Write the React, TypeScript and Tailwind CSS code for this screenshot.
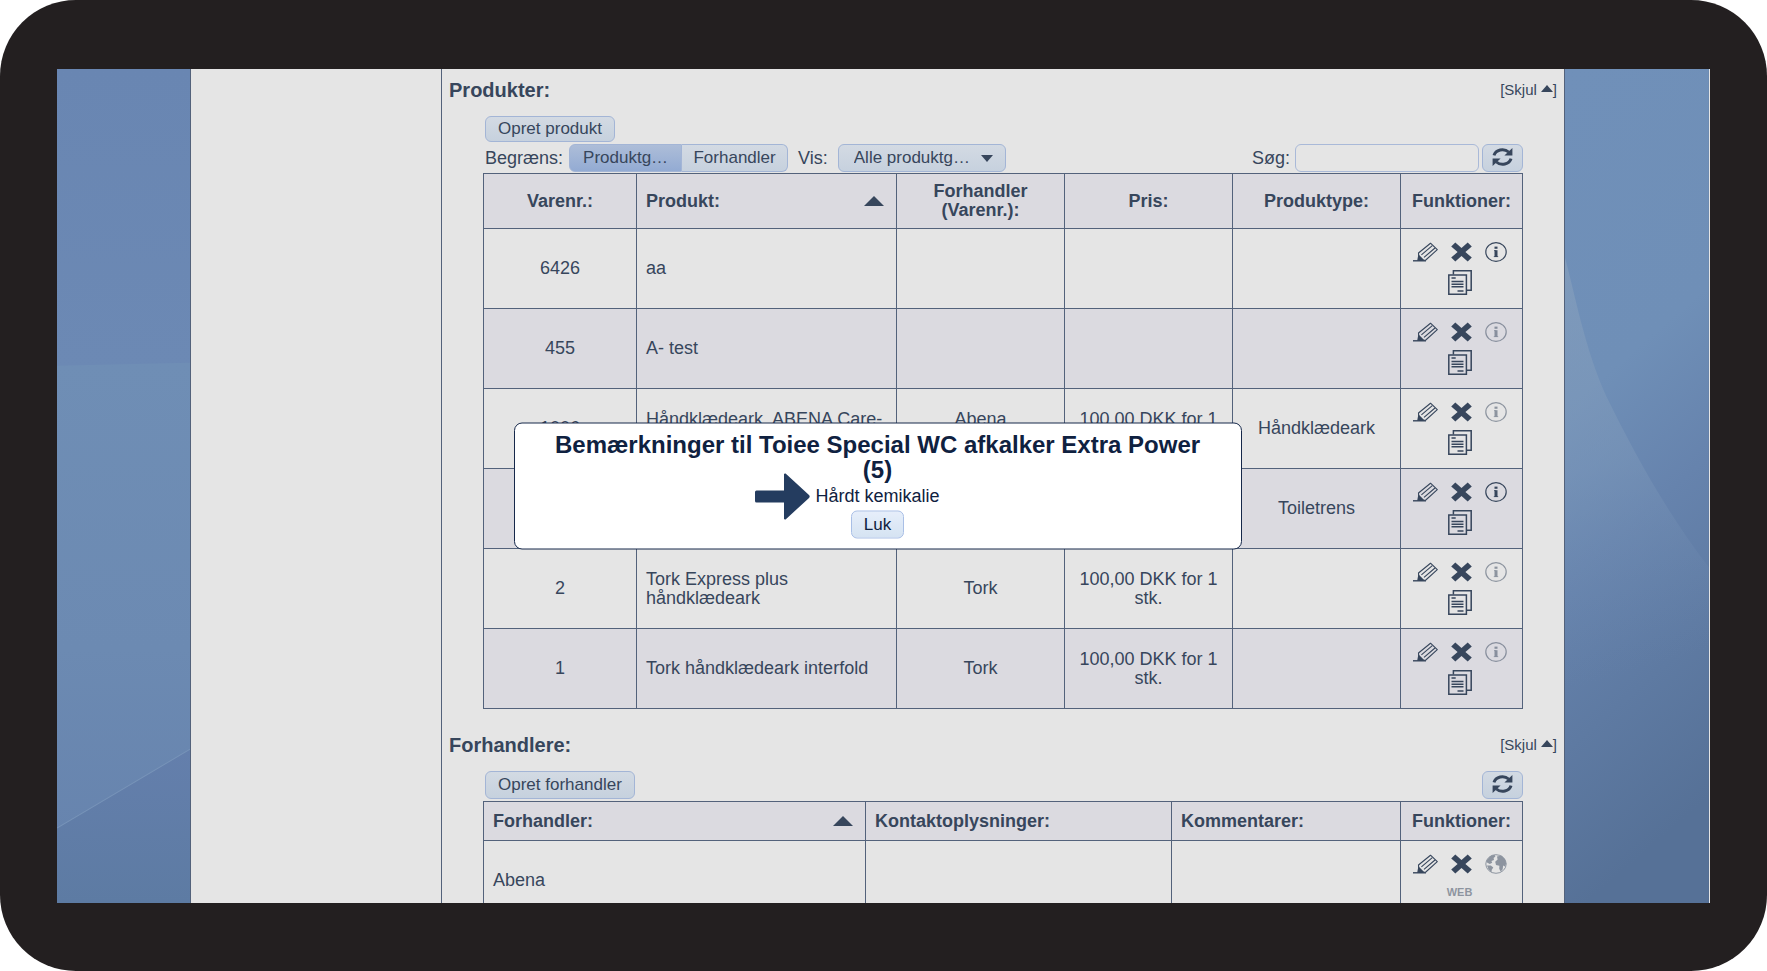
import React, { useState } from "react";
import clsx from "clsx";

interface Product {
  id: string;
  name: string;
  dealer?: string;
  price?: string;
  type?: string;
  hasNote?: boolean;
}

const products: Product[] = [
  { id: "6426", name: "aa", hasNote: true },
  { id: "455", name: "A- test" },
  { id: "1006", name: "Håndklædeark, ABENA Care-Ness", dealer: "Abena (1000006426)", price: "100,00 DKK for 1 stk.", type: "Håndklædeark" },
  { id: "5", name: "Toiee Special WC afkalker Extra Power", dealer: "Abena", price: "100,00 DKK for 1 stk.", type: "Toiletrens", hasNote: true },
  { id: "2", name: "Tork Express plus håndklædeark", dealer: "Tork", price: "100,00 DKK for 1 stk." },
  { id: "1", name: "Tork håndklædeark interfold", dealer: "Tork", price: "100,00 DKK for 1 stk." },
];

const cell = "border border-[#53627b] px-[9px]";
const buttonBase = "rounded-md border border-[#a3b5d6] bg-linear-to-b text-[17px] leading-6";
const buttonStyle = clsx(buttonBase, "from-[#d3dae3] to-[#c6d1de]");
const buttonActive = clsx(buttonBase, "from-[#adbdd8] to-[#93abd3]");

function PencilIcon() {
  return (
    <svg viewBox="0 0 25 20" className="h-5 w-[25px]" fill="none" stroke="currentColor" strokeWidth="1.1">
      <path d="M0 18.8h13" strokeWidth="1.4" />
      <path d="M5.5 11 17.5 1.2 24.3 7.6 12.8 18 6 18.4z" strokeLinejoin="round" />
      <path d="M8.4 12.8 19.3 3.6M11 15.4 22 6" />
      <path d="M5.4 12.2 11.6 18.4 4.2 18.8z" fill="currentColor" stroke="none" />
    </svg>
  );
}

function CrossIcon() {
  return (
    <svg viewBox="0 0 21 20" className="h-5 w-[21px]" fill="currentColor">
      <path d="M4.3.4 10.5 6 16.7.4 20.8 4.4 14.4 10l6.4 5.6-4.1 4-6.2-5.6-6.2 5.6-4.1-4L6.6 10 .2 4.4z" />
    </svg>
  );
}

function InfoIcon() {
  return (
    <svg viewBox="0 0 22 20" className="h-5 w-[22px]" fill="none" stroke="currentColor">
      <ellipse cx="11" cy="10" rx="10.2" ry="9.3" strokeWidth="1.2" />
      <path d="M11 8.2v6.8" strokeWidth="3" />
      <path d="M11 4.6v2.2" strokeWidth="3" />
      <path d="M9 8.6h2M8.8 14.6h4.4" strokeWidth="0.8" />
    </svg>
  );
}

function CopyIcon() {
  return (
    <svg viewBox="0 0 24 25" className="h-[25px] w-6" fill="none" stroke="currentColor" strokeWidth="1.5">
      <path d="M5.4 4.5V.8h17.8v19.4h-4.4" />
      <path d="M.8 5h17.6v19.2H.8z" />
      <path d="M3.5 8h4.2M3.5 11.6h12M3.5 14.2h12M3.5 16.8h12M9.5 21h6" />
    </svg>
  );
}

function GlobeIcon() {
  return (
    <svg viewBox="0 0 22 20" className="h-5 w-[22px]">
      <ellipse cx="11" cy="10" rx="10.2" ry="9.3" fill="none" stroke="currentColor" strokeWidth="1" />
      <path d="M1.5 6.4 5.4 2 9.4.8l1 1.6L8.6 4l.4 2-2.6 1 .8 1.8-2.4 1.2L2 8.6zM2 11.6l3.8-.2 2.5 2.2-1.5 2.2-.4 2.4-3-3zM12 2.6l4.4-1 3.6 3.6 1.2 4.4-1.2 2.8-1.8-1-.6 4-2 2-1.4-2.6.2-3-3.4-.8-.8-3.2 2.4-2.2z" fill="currentColor" />
    </svg>
  );
}

function RefreshIcon() {
  return (
    <svg viewBox="0 0 21 20" className="h-5 w-[21px]" fill="none" stroke="currentColor" strokeWidth="3">
      <path d="M2 8.4A8.6 7.4 0 0 1 16.6 5" />
      <path d="M19 11.6A8.6 7.4 0 0 1 4.4 15" />
      <path d="M20.4 1v7.6h-8zM.6 19v-7.6h8z" fill="currentColor" stroke="none" />
    </svg>
  );
}

function Triangle({ className }: { className: string }) {
  return (
    <svg viewBox="0 0 20 10" className={className} fill="currentColor" preserveAspectRatio="none">
      <path d="M10 0 20 10H0z" />
    </svg>
  );
}

function SectionTitle({ title, open, onToggle }: { title: string; open: boolean; onToggle: () => void }) {
  return (
    <div className="flex items-center justify-between px-[7px]">
      <h2 className="text-[20px] leading-6 font-bold">{title}</h2>
      <button type="button" onClick={onToggle} className="flex items-center text-[15px] leading-6">
        [{open ? "Skjul" : "Vis"}
        <Triangle className="mb-1 ml-1 h-[7px] w-3" />]
      </button>
    </div>
  );
}

function RowActions({ last, children }: { last: React.ReactNode; children: React.ReactNode }) {
  return (
    <div className="flex flex-col items-center gap-2 pr-1">
      <div className="flex items-center gap-[13px]">
        <button type="button" aria-label="Rediger"><PencilIcon /></button>
        <button type="button" aria-label="Slet"><CrossIcon /></button>
        {last}
      </div>
      {children}
    </div>
  );
}

function LeftWallpaper() {
  return (
    <svg viewBox="0 0 133 835" preserveAspectRatio="none" className="h-full w-full">
      <defs>
        <linearGradient id="leftTop" x1="0" y1="0" x2="0" y2="1">
          <stop offset="0" stopColor="#6986b2" />
          <stop offset="1" stopColor="#6c89b4" />
        </linearGradient>
        <linearGradient id="leftMid" x1="0" y1="0" x2="0" y2="1">
          <stop offset="0" stopColor="#6f8eb5" />
          <stop offset="0.6" stopColor="#6c8ab2" />
          <stop offset="1" stopColor="#6784ae" />
        </linearGradient>
        <linearGradient id="leftLow" x1="0" y1="0" x2="0" y2="1">
          <stop offset="0" stopColor="#647fac" />
          <stop offset="1" stopColor="#5d7ba3" />
        </linearGradient>
      </defs>
      <path d="M0 0H133V300H0z" fill="url(#leftTop)" />
      <path d="M0 297 133 294V700L0 770z" fill="url(#leftMid)" />
      <path d="M0 760 133 681V835H0z" fill="url(#leftLow)" />
      <path d="M0 760 133 681" stroke="#7793b8" strokeWidth="1" />
    </svg>
  );
}

function RightWallpaper() {
  return (
    <svg viewBox="0 0 146 835" preserveAspectRatio="none" className="h-full w-full">
      <defs>
        <linearGradient id="rightBase" x1="0" y1="0" x2="0.15" y2="1">
          <stop offset="0" stopColor="#7090b9" />
          <stop offset="0.4" stopColor="#6f8fb7" />
          <stop offset="0.6" stopColor="#6683ad" />
          <stop offset="1" stopColor="#567197" />
        </linearGradient>
        <linearGradient id="rightGlow" x1="0" y1="0" x2="0.1" y2="1">
          <stop offset="0" stopColor="#8aa2bd" stopOpacity="0.6" />
          <stop offset="0.5" stopColor="#7f9abb" stopOpacity="0.45" />
          <stop offset="1" stopColor="#6d89b0" stopOpacity="0" />
        </linearGradient>
      </defs>
      <path d="M0 0H146V835H0z" fill="url(#rightBase)" />
      <path d="M0 189C10 225 20 280 42 328 68 380 100 440 146 499V620H0z" fill="url(#rightGlow)" />
    </svg>
  );
}

function NoteDialog({ onClose }: { onClose: () => void }) {
  return (
    <div
      role="dialog"
      aria-labelledby="note-title"
      className="absolute top-1/2 left-1/2 flex w-[728px] -translate-x-1/2 -translate-y-1/2 flex-col items-center rounded-lg border border-[#16284a] bg-white px-8 pt-2 pb-[10px] text-[#0f2140]"
    >
      <h2 id="note-title" className="text-center text-[24px] leading-[25px] font-bold">
        Bemærkninger til Toiee Special WC afkalker Extra Power (5)
      </h2>
      <div className="relative">
        <svg viewBox="0 0 55 47" className="absolute top-1/2 right-full mr-1.5 h-[47px] w-[55px] -translate-y-1/2" fill="#243c5f">
          <path d="M1.5 17.5H29V1.2Q29.4 0 30.6.6L54 22Q55.4 23.5 54 25L30.6 46.4Q29.4 47 29 45.8V29.5H1.5Q0 29.5 0 28V19Q0 17.5 1.5 17.5z" />
        </svg>
        <p className="text-[18px] leading-[29px]">Hårdt kemikalie</p>
      </div>
      <button
        type="button"
        onClick={onClose}
        className="h-7 rounded-md border border-[#a9bfe6] bg-linear-to-b from-[#e6eefa] to-[#d5e3f2] px-3 text-[17px] leading-6"
      >
        Luk
      </button>
    </div>
  );
}

export default function App() {
  const [groupBy, setGroupBy] = useState("product");
  const [showProducts, setShowProducts] = useState(true);
  const [showDealers, setShowDealers] = useState(true);
  const [noteOpen, setNoteOpen] = useState(true);

  return (
    <div className="h-screen bg-white font-['Liberation_Sans',Arial,sans-serif] text-[18px] leading-[19px] text-[#37465c]">
      <div className="h-full rounded-[76px] bg-[#231f20] px-[57px] pt-[69px] pb-[68px]">
        <div className="grid h-full grid-cols-[134fr_1374fr_145fr] overflow-hidden border-r border-[#e5e5e5]">
          <div className="min-h-0"><LeftWallpaper /></div>

          <div className="relative flex min-h-0 border-x border-[#53627b] bg-[#e5e5e5]">
            <div className="w-[251px] shrink-0 border-r border-[#53627b]" />

            <main className="min-w-0 flex-1 overflow-hidden pt-[9px]">
              <SectionTitle title="Produkter:" open={showProducts} onToggle={() => setShowProducts(!showProducts)} />
              {showProducts && (
                <div className="mt-[14px] px-[41px]">
                  <button type="button" className={clsx(buttonStyle, "ml-[2px] h-[26px] px-3")}>Opret produkt</button>
                  <div className="mt-[2px] flex items-center pl-[2px]">
                    <span>Begræns:</span>
                    <div className="ml-[6px] flex">
                      <button
                        type="button"
                        aria-pressed={groupBy === "product"}
                        onClick={() => setGroupBy("product")}
                        className={clsx(groupBy === "product" ? buttonActive : buttonStyle, "h-7 w-[113px] rounded-r-none")}
                      >
                        Produktg…
                      </button>
                      <button
                        type="button"
                        aria-pressed={groupBy === "dealer"}
                        onClick={() => setGroupBy("dealer")}
                        className={clsx(groupBy === "dealer" ? buttonActive : buttonStyle, "h-7 w-[106px] rounded-l-none border-l-0")}
                      >
                        Forhandler
                      </button>
                    </div>
                    <label htmlFor="show" className="ml-[10px]">Vis:</label>
                    <div className="relative ml-[10px]">
                      <select id="show" className={clsx(buttonStyle, "h-7 w-[168px] appearance-none pl-[15px]")}>
                        <option>Alle produktg…</option>
                        <option>Håndklædeark</option>
                        <option>Toiletrens</option>
                      </select>
                      <Triangle className="pointer-events-none absolute top-[11px] right-[13px] h-[7px] w-3 rotate-180" />
                    </div>
                    <label htmlFor="search" className="ml-auto">Søg:</label>
                    <input id="search" type="text" className="ml-[5px] h-7 w-[184px] rounded-md border border-[#a9b9d8] px-2" />
                    <button type="button" aria-label="Opdater" className={clsx(buttonStyle, "ml-[3px] flex h-7 w-[41px] justify-center pt-[2px]")}>
                      <RefreshIcon />
                    </button>
                  </div>

                  <table className="mt-px w-full table-fixed border-collapse">
                    <colgroup>
                      <col className="w-[153px]" />
                      <col className="w-[260px]" />
                      <col className="w-[168px]" />
                      <col className="w-[168px]" />
                      <col className="w-[168px]" />
                      <col className="w-[122px]" />
                    </colgroup>
                    <thead>
                      <tr className="h-[55px] bg-[#dbdae0]">
                        <th className={cell}>Varenr.:</th>
                        <th className={clsx(cell, "text-left")}>
                          <div className="flex items-center justify-between pr-[3px]">
                            Produkt:
                            <Triangle className="h-[10px] w-5" />
                          </div>
                        </th>
                        <th className={cell}>Forhandler (Varenr.):</th>
                        <th className={cell}>Pris:</th>
                        <th className={cell}>Produktype:</th>
                        <th className={cell}>Funktioner:</th>
                      </tr>
                    </thead>
                    <tbody>
                      {products.map((product) => (
                        <tr key={product.id} className="h-20 text-center even:bg-[#dbdae0]">
                          <td className={cell}>{product.id}</td>
                          <td className={clsx(cell, "text-left")}>{product.name}</td>
                          <td className={cell}>{product.dealer}</td>
                          <td className={cell}>{product.price}</td>
                          <td className={cell}>{product.type}</td>
                          <td className={cell}>
                            <RowActions
                              last={
                                <button
                                  type="button"
                                  aria-label="Bemærkninger"
                                  disabled={!product.hasNote}
                                  onClick={() => setNoteOpen(true)}
                                  className="disabled:opacity-50"
                                >
                                  <InfoIcon />
                                </button>
                              }
                            >
                              <button type="button" aria-label="Kopier"><CopyIcon /></button>
                            </RowActions>
                          </td>
                        </tr>
                      ))}
                    </tbody>
                  </table>
                </div>
              )}

              <div className="mt-6">
                <SectionTitle title="Forhandlere:" open={showDealers} onToggle={() => setShowDealers(!showDealers)} />
              </div>
              {showDealers && (
                <div className="mt-[14px] px-[41px]">
                  <div className="flex items-center justify-between pl-[2px]">
                    <button type="button" className={clsx(buttonStyle, "h-7 px-3")}>Opret forhandler</button>
                    <button type="button" aria-label="Opdater" className={clsx(buttonStyle, "flex h-7 w-[41px] justify-center pt-[2px]")}>
                      <RefreshIcon />
                    </button>
                  </div>
                  <table className="mt-[2px] w-full table-fixed border-collapse">
                    <colgroup>
                      <col className="w-[382px]" />
                      <col className="w-[306px]" />
                      <col className="w-[229px]" />
                      <col className="w-[122px]" />
                    </colgroup>
                    <thead>
                      <tr className="h-[39px] bg-[#dbdae0] text-left">
                        <th className={cell}>
                          <div className="flex items-center justify-between pr-[3px]">
                            Forhandler:
                            <Triangle className="h-[10px] w-5" />
                          </div>
                        </th>
                        <th className={cell}>Kontaktoplysninger:</th>
                        <th className={cell}>Kommentarer:</th>
                        <th className={clsx(cell, "text-center")}>Funktioner:</th>
                      </tr>
                    </thead>
                    <tbody>
                      <tr className="h-20">
                        <td className={cell}>Abena</td>
                        <td className={cell} />
                        <td className={cell} />
                        <td className={cell}>
                          <RowActions
                            last={
                              <button type="button" aria-label="Hjemmeside" disabled className="opacity-50">
                                <GlobeIcon />
                              </button>
                            }
                          >
                            <button type="button" disabled className="h-[25px] pb-1 text-[11px] font-bold opacity-50">WEB</button>
                          </RowActions>
                        </td>
                      </tr>
                    </tbody>
                  </table>
                </div>
              )}
            </main>

            {noteOpen && <NoteDialog onClose={() => setNoteOpen(false)} />}
          </div>

          <div className="min-h-0"><RightWallpaper /></div>
        </div>
      </div>
    </div>
  );
}
